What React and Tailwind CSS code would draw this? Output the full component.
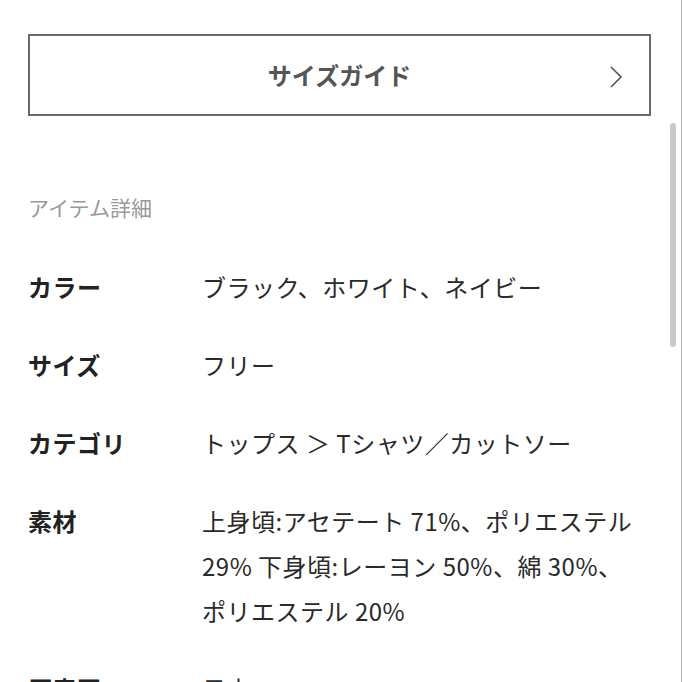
const rows = [
  { label: "カラー", lines: ["ブラック、ホワイト、ネイビー"] },
  { label: "サイズ", lines: ["フリー"] },
  { label: "カテゴリ", lines: ["トップス ＞ Tシャツ／カットソー"] },
  {
    label: "素材",
    lines: ["上身頃:アセテート 71%、ポリエステル", "29% 下身頃:レーヨン 50%、綿 30%、", "ポリエステル 20%"],
  },
  { label: "原産国", lines: ["日本"] },
];

export default function App() {
  return (
    <div
      className="relative h-[682px] w-[682px] overflow-hidden border-r border-[#b5b5b5] bg-white"
      style={{ fontFamily: '"Noto Sans CJK JP", "Noto Sans", sans-serif' }}
    >
      {/* scrollbar thumb */}
      <div className="absolute left-[670px] top-[123px] h-[224px] w-[6px] rounded-full bg-[#c9c9c9]" />

      <div className="pl-[28px] pr-[30px] pt-[34px]">
        <button className="relative flex h-[82px] w-full items-center justify-center border-2 border-[#6a6a6a] bg-white">
          <span className="text-[24px] font-bold text-[#555]">サイズガイド</span>
          <svg
            className="absolute right-[26px] top-[29px]"
            width="14"
            height="24"
            viewBox="0 0 14 24"
            fill="none"
          >
            <polyline points="2,2 12,12 2,22" stroke="#555" strokeWidth="1.6" />
          </svg>
        </button>

        <h2 className="mt-[76px] text-[21px] leading-[30px] text-[#999]">アイテム詳細</h2>

        <dl className="mt-[42px] flex flex-col gap-[33px]">
          {rows.map((row) => (
            <div key={row.label} className="flex">
              <dt className="w-[174px] shrink-0 text-[24px] font-bold leading-[45px] tracking-[0.5px] text-[#222]">
                {row.label}
              </dt>
              <dd className="flex-1 text-[24px] leading-[45px] tracking-[0.5px] text-[#2a2a2a]">
                {row.lines.map((line) => (
                  <span key={line} className="block whitespace-nowrap">
                    {line}
                  </span>
                ))}
              </dd>
            </div>
          ))}
        </dl>
      </div>
    </div>
  );
}
